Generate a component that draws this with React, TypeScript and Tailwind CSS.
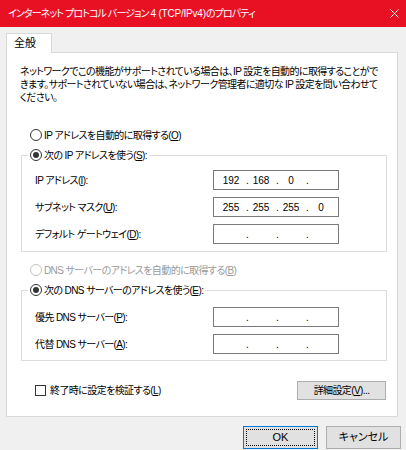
import React from "react";

const jp = "font-['Liberation_Sans','Noto_Sans_CJK_JP',sans-serif] [font-feature-settings:'palt']";

const Radio = ({ checked, disabled }: { checked?: boolean; disabled?: boolean }) => (
  <span
    className={`w-[12px] h-[12px] rounded-full border bg-white flex items-center justify-center shrink-0 ${
      disabled ? "border-[#c4c4c4]" : "border-[#333333]"
    }`}
  >
    {checked && <span className="w-[6px] h-[6px] rounded-full bg-[#333333]" />}
  </span>
);

const IpBox = ({ parts }: { parts: string[] }) => (
  <div className="w-[126px] h-[20px] border border-[#7a7a7a] bg-white flex items-center pl-[5px] text-[10px] tracking-normal text-black">
    {parts.map((p, i) => (
      <React.Fragment key={i}>
        <span className="w-[24px] text-center">{p}</span>
        {i < 3 && <span className="w-[6px] pl-[3px]">.</span>}
      </React.Fragment>
    ))}
  </div>
);

const Row = ({ label, parts }: { label: React.ReactNode; parts: string[] }) => (
  <div className="flex items-center h-[20px]">
    <div className="w-[178px] whitespace-nowrap">{label}</div>
    <IpBox parts={parts} />
  </div>
);

const empty = ["", "", "", ""];

export default function App() {
  return (
    <div className={`w-[406px] h-[450px] bg-[#f0f0f0] text-[10px] text-black tracking-[-0.6px] ${jp}`}>
      {/* Title bar */}
      <div className="h-[27px] bg-[#e81123] flex items-center justify-between pl-[8px] pr-[7px] text-white text-[10px] tracking-[-0.9px]">
        <span className="whitespace-nowrap">
          インターネット プロトコル バージョン <span className="tracking-[-0.2px]">4 (TCP/IPv4)</span>のプロパティ
        </span>
        <svg width="9" height="9" viewBox="0 0 9 9">
          <path d="M0.5 0.5 L8.5 8.5 M8.5 0.5 L0.5 8.5" stroke="white" strokeWidth="1" />
        </svg>
      </div>

      <div className="px-[6px] pt-[6px] w-[392px] box-content">
        {/* Tab */}
        <div className="relative z-10 -mb-px w-[46px] h-[20px] bg-white border border-b-0 border-[#d9d9d9] flex items-center pl-[7px] text-[11px] tracking-normal">
          全般
        </div>

        {/* Panel */}
        <div className="h-[365px] bg-white border border-[#d9d9d9] pl-[13px] pt-[12px]">
          <div className="leading-[13px] whitespace-nowrap">
            <div>ネットワークでこの機能がサポートされている場合は、IP 設定を自動的に取得することがで</div>
            <div>きます。サポートされていない場合は、ネットワーク管理者に適切な IP 設定を問い合わせて</div>
            <div>ください。</div>
          </div>

          <div className="mt-[23px] ml-[10px] h-[16px] flex items-center gap-[2px]">
            <Radio />
            <span>
              IP アドレスを自動的に取得する(<u>O</u>)
            </span>
          </div>

          <fieldset className="mt-[4px] ml-[1px] w-[366px] border border-[#dcdcdc]">
            <legend className="ml-[6px] px-[2px] h-[16px] flex items-center gap-[2px] bg-white">
              <Radio checked />
              <span>
                次の IP アドレスを使う(<u>S</u>):
              </span>
            </legend>
            <div className="pl-[13px] pt-[7px] pb-[7px] flex flex-col gap-[7px]">
              <Row label={<>IP アドレス(<u>I</u>):</>} parts={["192", "168", "0", ""]} />
              <Row label={<>サブネット マスク(<u>U</u>):</>} parts={["255", "255", "255", "0"]} />
              <Row label={<>デフォルト ゲートウェイ(<u>D</u>):</>} parts={empty} />
            </div>
          </fieldset>

          <div className="mt-[10px] ml-[10px] h-[16px] flex items-center gap-[2px] text-[#9a9a9a]">
            <Radio disabled />
            <span>
              DNS サーバーのアドレスを自動的に取得する(<u>B</u>)
            </span>
          </div>

          <fieldset className="mt-[4px] ml-[1px] w-[366px] border border-[#dcdcdc]">
            <legend className="ml-[6px] px-[2px] h-[16px] flex items-center gap-[2px] bg-white">
              <Radio checked />
              <span>
                次の DNS サーバーのアドレスを使う(<u>E</u>):
              </span>
            </legend>
            <div className="pl-[13px] pt-[9px] pb-[6px] flex flex-col gap-[7px]">
              <Row label={<>優先 DNS サーバー(<u>P</u>):</>} parts={empty} />
              <Row label={<>代替 DNS サーバー(<u>A</u>):</>} parts={empty} />
            </div>
          </fieldset>

          <div className="mt-[20px] w-[366px] flex items-center justify-between">
            <div className="ml-[15px] flex items-center gap-[4px]">
              <span className="w-[11px] h-[11px] border border-[#333333] bg-white" />
              <span>
                終了時に設定を検証する(<u>L</u>)
              </span>
            </div>
            <button className="w-[89px] h-[19px] bg-[#e1e1e1] border border-[#adadad] flex items-center justify-center">
              詳細設定(<u>V</u>)...
            </button>
          </div>
        </div>
      </div>

      {/* Dialog buttons */}
      <div className="mt-[9px] pr-[5px] flex justify-end gap-[8px] text-[11px] tracking-normal">
        <button className="w-[75px] h-[23px] bg-[#e1e1e1] border border-[#0078d7] p-[2px]">
          <div className="w-full h-full border border-dotted border-black flex items-center justify-center">OK</div>
        </button>
        <button className="w-[75px] h-[23px] bg-[#e1e1e1] border border-[#adadad] flex items-center justify-center">
          キャンセル
        </button>
      </div>
    </div>
  );
}
